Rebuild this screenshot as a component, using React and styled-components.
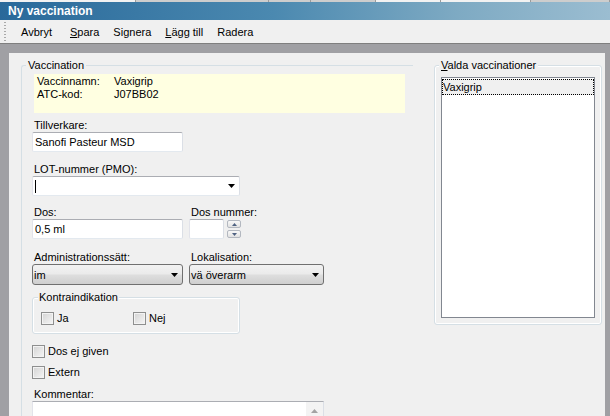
import React from "react";
import styled, { createGlobalStyle } from "styled-components";

const Global = createGlobalStyle`
  html, body { margin: 0; padding: 0; background: #f0f0f0; }
  body {
    font-family: "Liberation Sans", Arial, sans-serif;
    font-size: 11px;
    color: #000;
  }
  * { box-sizing: border-box; }
`;

const Window = styled.div`
  width: 610px;
  height: 416px;
  display: flex;
  flex-direction: column;
  overflow: hidden;
  background: #f0f0f0;
`;

const TopStrip = styled.div`
  height: 2px;
  flex: none;
  display: flex;
  background: #d6d6d6;
`;

const StripCell = styled.div`
  width: ${(p) => p.$w}px;
  flex: none;
  height: 100%;
  border-right: 1px solid #9b9b9b;
  background: ${(p) => (p.$light ? "#f2f2f2" : "#cdcdcd")};
`;

const TitleBar = styled.div`
  height: 18px;
  flex: none;
  display: flex;
  align-items: center;
  padding-left: 8px;
  color: #fff;
  font-weight: bold;
  font-size: 12px;
  background: linear-gradient(to right, #29699a 0%, #4b89b0 45%, #7eaac3 75%, #9bbdd1 100%);
`;

const Toolbar = styled.div`
  height: 24px;
  flex: none;
  display: flex;
  align-items: center;
  padding-left: 4px;
  border-bottom: 1px solid #7f7f7f;
  background: #f0f0f0;
`;

const Grip = styled.span`
  width: 2px;
  height: 19px;
  margin-right: 8px;
  background: repeating-linear-gradient(to bottom, #a9a9a9 0 1px, transparent 1px 3px);
`;

const ToolButton = styled.span`
  padding: 0 7px;
  margin-right: ${(p) => (p.$wide ? 4 : 0)}px;
  line-height: 16px;
  white-space: nowrap;
`;

const Key = styled.span`
  text-decoration: underline;
`;

const Frame = styled.div`
  flex: 1;
  min-height: 0;
  display: flex;
  background: #a0a0a4;
  padding: 9px 5px 0 9px;
`;

const Panel = styled.div`
  flex: 1;
  min-width: 0;
  display: flex;
  align-items: flex-start;
  gap: 21px;
  padding: 6px 3px 0 12px;
  background: #f0f0f0;
  overflow: hidden;
`;

const GroupBox = styled.fieldset`
  margin: ${(p) => p.$mt || 0}px 0 0 0;
  padding: 0;
  width: ${(p) => p.$w}px;
  flex: none;
  min-width: 0;
  border: 1px solid #d5dfe5;
  border-right: ${(p) => (p.$open ? "none" : "1px solid #d5dfe5")};
  border-radius: ${(p) => (p.$open ? "3px 0 0 3px" : "3px")};
  box-shadow: ${(p) => (p.$open ? "none" : "inset 0 0 0 1px #fff")};
`;

const GroupLegend = styled.legend`
  margin-left: ${(p) => p.$indent}px;
  padding: 0 ${(p) => p.$pad}px;
  line-height: 13px;
  font-size: 11px;
  background: #f0f0f0;
`;

const GroupBody = styled.div`
  padding: ${(p) => p.$pad};
`;

const InfoBox = styled.div`
  margin-left: 2px;
  height: 39px;
  padding: 1px 3px 0;
  display: grid;
  grid-template-columns: 77px auto;
  grid-auto-rows: 13px;
  align-content: start;
  line-height: 13px;
  background: #ffffe1;
`;

const FieldLabel = styled.div`
  line-height: 13px;
  padding-left: 2px;
  margin-top: ${(p) => p.$mt || 0}px;
  white-space: nowrap;
`;

const TextBox = styled.div`
  width: ${(p) => p.$w}px;
  height: 20px;
  flex: none;
  display: flex;
  align-items: center;
  justify-content: space-between;
  padding: 0 4px 0 2px;
  line-height: 13px;
  background: #fff;
  border: 1px solid;
  border-color: #abadb3 #dbdfe6 #e3e9ef #e2e3ea;
  border-radius: 2px;
`;

const Caret = styled.span`
  width: 1px;
  height: 13px;
  background: #000;
`;

const DropButton = styled.div`
  width: ${(p) => p.$w}px;
  height: 21px;
  display: flex;
  align-items: center;
  justify-content: space-between;
  padding: 0 4px 0 1px;
  border: 1px solid #707070;
  border-radius: 3px;
  background: linear-gradient(#f2f2f2, #ebebeb 45%, #dddddd 55%, #cfcfcf);
`;

const Row = styled.div`
  display: flex;
  gap: 6px;
  margin-top: ${(p) => p.$mt || 0}px;
`;

const Column = styled.div`
  width: ${(p) => p.$w}px;
  display: flex;
  flex-direction: column;
`;

const SpinRow = styled.div`
  display: flex;
  align-items: flex-start;
`;

const SpinCol = styled.div`
  display: flex;
  flex-direction: column;
  gap: 2px;
  margin-left: 3px;
  padding-top: 1px;
`;

const SpinBtn = styled.div`
  width: 14px;
  height: 8px;
  display: flex;
  align-items: center;
  justify-content: center;
  border: 1px solid #b3b8c0;
  border-radius: 2px;
  background: linear-gradient(#f8f8f8, #e2e2e2);
`;

const CheckRow = styled.div`
  display: flex;
  align-items: center;
  gap: 3px;
  height: 13px;
  line-height: 13px;
  width: ${(p) => (p.$w ? `${p.$w}px` : "auto")};
  margin-top: ${(p) => p.$mt || 0}px;
`;

const CheckBox = styled.span`
  width: 13px;
  height: 13px;
  flex: none;
  border: 1px solid #8e8f8f;
  background: linear-gradient(135deg, #d3d3d3, #f6f6f6);
  box-shadow: inset 0 0 0 1px #f3f3f3;
`;

const ChecksLine = styled.div`
  display: flex;
`;

const TextArea = styled.div`
  width: 292px;
  height: 40px;
  display: flex;
  justify-content: flex-end;
  background: #fff;
  border: 1px solid;
  border-color: #abadb3 #dbdfe6 #e3e9ef #e2e3ea;
`;

const ScrollTrack = styled.div`
  width: 17px;
  background: #f3f3f3;
  display: flex;
  flex-direction: column;
`;

const ScrollBtn = styled.div`
  height: 17px;
  display: flex;
  align-items: center;
  justify-content: center;
`;

const ListBox = styled.div`
  height: 241px;
  padding-top: 1px;
  border: 1px solid #828790;
  background: #fff;
`;

const ListItem = styled.div`
  height: 16px;
  line-height: 14px;
  border: 1px dotted #000;
  background: #f0f0f0;
`;

const Arrow = ({ color = "#000", w = 7, h = 4 }) => (
  <svg width={w} height={h} viewBox={`0 0 ${w} ${h}`}>
    <path d={`M0 0H${w}L${w / 2} ${h}Z`} fill={color} />
  </svg>
);

const UpArrow = ({ color, w = 7, h = 4 }) => (
  <svg width={w} height={h} viewBox={`0 0 ${w} ${h}`}>
    <path d={`M0 ${h}H${w}L${w / 2} 0Z`} fill={color} />
  </svg>
);

const strip = [
  { w: 136, light: true },
  { w: 133, light: false },
  { w: 42, light: false },
  { w: 65, light: false },
  { w: 65, light: true },
  { w: 90, light: true },
  { w: 79, light: false },
];

export default function App() {
  return (
    <>
      <Global />
      <Window>
        <TopStrip>
          {strip.map((c, i) => (
            <StripCell key={i} $w={c.w} $light={c.light} />
          ))}
        </TopStrip>
        <TitleBar>Ny vaccination</TitleBar>
        <Toolbar>
          <Grip />
          <ToolButton $wide>Avbryt</ToolButton>
          <ToolButton>
            <Key>S</Key>para
          </ToolButton>
          <ToolButton>Signera</ToolButton>
          <ToolButton>
            <Key>L</Key>ägg till
          </ToolButton>
          <ToolButton>Radera</ToolButton>
        </Toolbar>
        <Frame>
          <Panel>
            <GroupBox $w={392} $open>
              <GroupLegend $indent={4} $pad={2}>Vaccination</GroupLegend>
              <GroupBody $pad="2px 8px 0 10px">
                <InfoBox>
                  <span>Vaccinnamn:</span>
                  <span>Vaxigrip</span>
                  <span>ATC-kod:</span>
                  <span>J07BB02</span>
                </InfoBox>

                <FieldLabel $mt={6}>Tillverkare:</FieldLabel>
                <TextBox $w={151}>Sanofi Pasteur MSD</TextBox>

                <FieldLabel $mt={11}>LOT-nummer (PMO):</FieldLabel>
                <TextBox $w={208}>
                  <Caret />
                  <Arrow />
                </TextBox>

                <Row $mt={10}>
                  <Column $w={151}>
                    <FieldLabel>Dos:</FieldLabel>
                    <TextBox $w={151}>0,5 ml</TextBox>
                  </Column>
                  <Column $w={60}>
                    <FieldLabel>Dos nummer:</FieldLabel>
                    <SpinRow>
                      <TextBox $w={35} />
                      <SpinCol>
                        <SpinBtn>
                          <UpArrow color="#4f6282" w={5} h={3} />
                        </SpinBtn>
                        <SpinBtn>
                          <Arrow color="#4f6282" w={5} h={3} />
                        </SpinBtn>
                      </SpinCol>
                    </SpinRow>
                  </Column>
                </Row>

                <Row $mt={12}>
                  <Column $w={151}>
                    <FieldLabel>Administrationssätt:</FieldLabel>
                    <DropButton $w={151}>
                      <span>im</span>
                      <Arrow />
                    </DropButton>
                  </Column>
                  <Column $w={135}>
                    <FieldLabel>Lokalisation:</FieldLabel>
                    <DropButton $w={135}>
                      <span>vä överarm</span>
                      <Arrow />
                    </DropButton>
                  </Column>
                </Row>

                <GroupBox $w={208} $mt={6}>
                  <GroupLegend $indent={5} $pad={1}>Kontraindikation</GroupLegend>
                  <GroupBody $pad="8px 8px 8px 8px">
                    <ChecksLine>
                      <CheckRow $w={92}>
                        <CheckBox />
                        <span>Ja</span>
                      </CheckRow>
                      <CheckRow>
                        <CheckBox />
                        <span>Nej</span>
                      </CheckRow>
                    </ChecksLine>
                  </GroupBody>
                </GroupBox>

                <CheckRow $mt={11}>
                  <CheckBox />
                  <span>Dos ej given</span>
                </CheckRow>
                <CheckRow $mt={8}>
                  <CheckBox />
                  <span>Extern</span>
                </CheckRow>

                <FieldLabel $mt={9}>Kommentar:</FieldLabel>
                <TextArea>
                  <ScrollTrack>
                    <ScrollBtn>
                      <UpArrow color="#a3a3a3" w={7} h={4} />
                    </ScrollBtn>
                  </ScrollTrack>
                </TextArea>
              </GroupBody>
            </GroupBox>

            <GroupBox $w={168}>
              <GroupLegend $indent={4} $pad={2}>
                <Key>V</Key>alda vaccinationer
              </GroupLegend>
              <GroupBody $pad="5px 6px 6px 6px">
                <ListBox>
                  <ListItem>Vaxigrip</ListItem>
                </ListBox>
              </GroupBody>
            </GroupBox>
          </Panel>
        </Frame>
      </Window>
    </>
  );
}
